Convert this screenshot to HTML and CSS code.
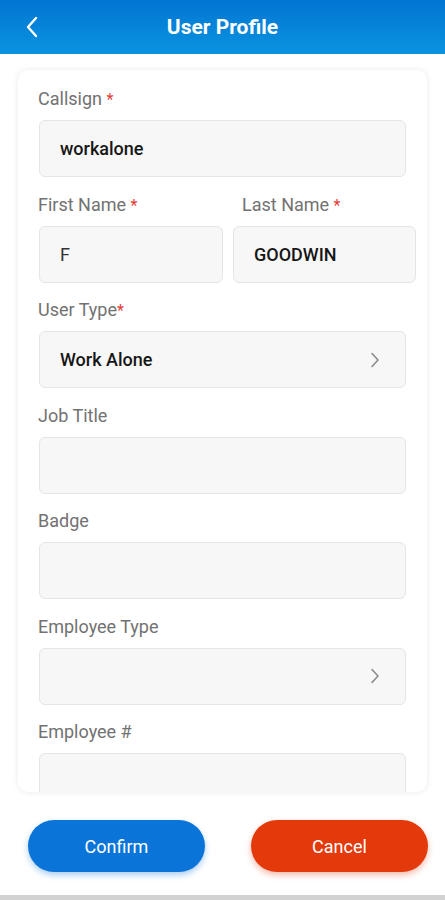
FILE: index.html
```html
<!DOCTYPE html>
<html>
<head>
<meta charset="utf-8">
<link rel="stylesheet" href="styles.css">
</head>
<body>
<div class="app">
  <header class="topbar">
    <svg class="back" width="14" height="22" viewBox="0 0 14 22"><path d="M11 2 L3 11 L11 20" fill="none" stroke="#fff" stroke-width="2.4" stroke-linecap="round" stroke-linejoin="round"/></svg>
    <h1 class="title">User Profile</h1>
  </header>
  <main class="content">
    <section class="card">
      <div class="field">
        <div class="label">Callsign <span class="req">*</span></div>
        <div class="box"><span class="value">workalone</span></div>
      </div>
      <div class="field">
        <div class="pair">
          <div class="half">
            <div class="label">First Name <span class="req">*</span></div>
            <div class="box"><span class="value plain">F</span></div>
          </div>
          <div class="half second">
            <div class="label">Last Name <span class="req">*</span></div>
            <div class="box"><span class="value">GOODWIN</span></div>
          </div>
        </div>
      </div>
      <div class="field">
        <div class="label">User Type<span class="req">*</span></div>
        <div class="box select"><span class="value">Work Alone</span>
          <svg class="chev" width="10" height="16" viewBox="0 0 10 16"><path d="M2 1.5 L8 8 L2 14.5" fill="none" stroke="#8a8a8a" stroke-width="1.6" stroke-linecap="round" stroke-linejoin="round"/></svg>
        </div>
      </div>
      <div class="field">
        <div class="label">Job Title</div>
        <div class="box"></div>
      </div>
      <div class="field">
        <div class="label">Badge</div>
        <div class="box"></div>
      </div>
      <div class="field">
        <div class="label">Employee Type</div>
        <div class="box select">
          <svg class="chev" width="10" height="16" viewBox="0 0 10 16"><path d="M2 1.5 L8 8 L2 14.5" fill="none" stroke="#8a8a8a" stroke-width="1.6" stroke-linecap="round" stroke-linejoin="round"/></svg>
        </div>
      </div>
      <div class="field">
        <div class="label">Employee #</div>
        <div class="box"></div>
      </div>
    </section>
  </main>
  <footer class="actions">
    <button class="btn confirm">Confirm</button>
    <button class="btn cancel">Cancel</button>
  </footer>
  <div class="navbar"></div>
</div>
</body>
</html>
```
FILE: styles.css
```css
* { box-sizing: border-box; }
html, body { margin: 0; padding: 0; }
body {
  font-family: Roboto, "Liberation Sans", Arial, sans-serif;
  background: #fff;
  width: 445px;
  height: 900px;
  overflow: hidden;
}
.app {
  display: flex;
  flex-direction: column;
  height: 900px;
}
.topbar {
  height: 54px;
  flex: none;
  background: linear-gradient(180deg, #0275d3 0%, #0a93df 100%);
  display: flex;
  align-items: center;
  justify-content: center;
  position: relative;
}
.back {
  position: absolute;
  left: 25px;
  top: 16px;
}
.title {
  margin: 0;
  color: #fff;
  font-size: 21px;
  font-weight: 700;
  letter-spacing: 0;
}
.content {
  flex: none;
  padding: 16px 18px 0 18px;
}
.card {
  height: 722px;
  overflow: hidden;
  background: #fff;
  border-radius: 10px;
  box-shadow: 0 0 6px rgba(0, 0, 0, 0.09);
  padding: 19px 21px 0 21px;
}
.field {
  height: 105.5px;
}
.label {
  height: 20px;
  font-size: 18px;
  line-height: 20px;
  color: #727272;
  margin-left: -1px;
  margin-bottom: 11px;
  white-space: nowrap;
}
.second .label { margin-left: 9px; }
.req { color: #e53935; font-size: 16px; line-height: 0; }
.box {
  height: 57px;
  background: #f7f7f7;
  border: 1px solid #e5e5e5;
  border-radius: 6px;
  display: flex;
  align-items: center;
  padding: 0 20px;
}
.value {
  font-size: 18px;
  font-weight: 500;
  color: #161616;
}
.value.plain { font-weight: 400; color: #333; }
.select { justify-content: space-between; }
.select .chev { margin-left: auto; margin-right: 5px; }
.pair {
  display: grid;
  grid-template-columns: 184px 183px;
  column-gap: 10px;
  width: 377px;
}
.actions {
  flex: none;
  display: flex;
  justify-content: space-between;
  padding: 28px 17px 0 28px;
  height: 103px;
}
.btn {
  width: 177px;
  height: 52px;
  border: none;
  border-radius: 26px;
  color: #fff;
  font-family: Roboto, "Liberation Sans", Arial, sans-serif;
  font-size: 18px;
  font-weight: 400;
}
.confirm {
  background: #0a74d8;
  box-shadow: 0 3px 6px rgba(10, 116, 216, 0.35);
}
.cancel {
  background: #e3390b;
  box-shadow: 0 3px 6px rgba(227, 57, 11, 0.35);
}
.navbar {
  flex: 1;
  background: #d2d2d2;
}
```
